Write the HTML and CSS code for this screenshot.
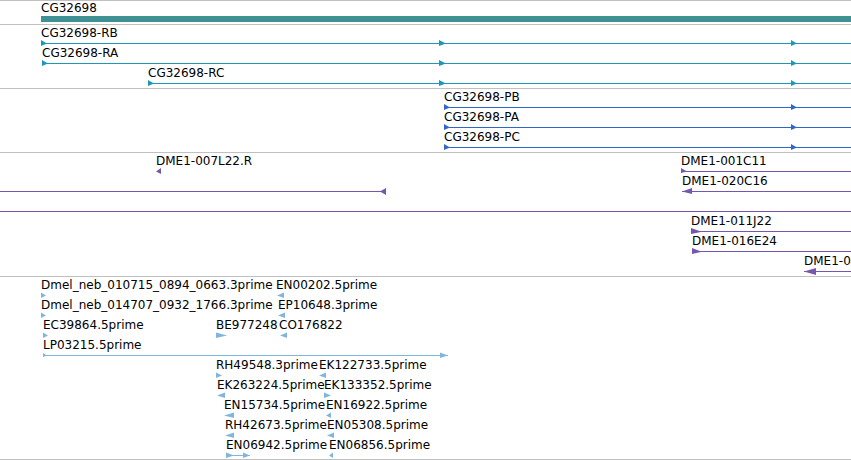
FILE: index.html
```html
<!DOCTYPE html>
<html lang="en">
<head>
    <meta charset="UTF-8">
    <title>CG32698 region</title>
    <link rel="stylesheet" href="styles.css">
</head>
<body>
<div id="panel">

    <!-- gene -->
    <div class="track gene">
        <svg width="851" height="23">
            <text x="41" y="11">CG32698</text>
            <rect x="41" y="15" width="810" height="6"></rect>
        </svg>
    </div>

    <!-- transcripts -->
    <div class="track tx">
        <svg width="851" height="63">
            <text x="41" y="12">CG32698-RB</text>
            <line x1="41" y1="18.5" x2="851" y2="18.5"></line>
            <polygon points="41,15 47,18.5 41,21"></polygon>
            <polygon points="439,15 446,18.5 439,21"></polygon>
            <polygon points="791,15 797,18.5 791,21"></polygon>

            <text x="42" y="32">CG32698-RA</text>
            <line x1="42" y1="38.5" x2="851" y2="38.5"></line>
            <polygon points="42,35 48,38.5 42,41"></polygon>
            <polygon points="439,35 446,38.5 439,41"></polygon>
            <polygon points="791,35 797,38.5 791,41"></polygon>

            <text x="148" y="52">CG32698-RC</text>
            <line x1="148" y1="58.5" x2="851" y2="58.5"></line>
            <polygon points="148,55 154,58.5 148,61"></polygon>
            <polygon points="439,55 446,58.5 439,61"></polygon>
            <polygon points="791,55 797,58.5 791,61"></polygon>
        </svg>
    </div>

    <!-- proteins -->
    <div class="track prot">
        <svg width="851" height="63">
            <text x="444" y="12">CG32698-PB</text>
            <line x1="444" y1="18.5" x2="851" y2="18.5"></line>
            <polygon points="444,15 450,18.5 444,21"></polygon>
            <polygon points="791,15 797,18.5 791,21"></polygon>

            <text x="444" y="32">CG32698-PA</text>
            <line x1="444" y1="38.5" x2="851" y2="38.5"></line>
            <polygon points="444,35 450,38.5 444,41"></polygon>
            <polygon points="791,35 797,38.5 791,41"></polygon>

            <text x="444" y="52">CG32698-PC</text>
            <line x1="444" y1="58.5" x2="851" y2="58.5"></line>
            <polygon points="444,55 450,58.5 444,61"></polygon>
            <polygon points="791,55 797,58.5 791,61"></polygon>
        </svg>
    </div>

    <!-- BAC ends -->
    <div class="track bac">
        <svg width="851" height="123">
            <text x="156" y="12">DME1-007L22.R</text>
            <polygon points="156,18.5 161,15 161,21"></polygon>

            <text x="681" y="12">DME1-001C11</text>
            <line x1="681" y1="18.5" x2="851" y2="18.5"></line>
            <polygon points="681,15 687,18.5 681,20"></polygon>

            <line x1="0" y1="38.5" x2="386" y2="38.5"></line>
            <polygon points="380,38.5 386,35 386,42"></polygon>

            <text x="682" y="32">DME1-020C16</text>
            <line x1="682" y1="38.5" x2="851" y2="38.5"></line>
            <polygon points="682,38.5 692,35 692,41"></polygon>

            <line x1="0" y1="58.5" x2="851" y2="58.5"></line>

            <text x="691" y="72">DME1-011J22</text>
            <line x1="691" y1="78.5" x2="851" y2="78.5"></line>
            <polygon points="691,75 701,78.5 701,79 691,81"></polygon>

            <text x="692" y="92">DME1-016E24</text>
            <line x1="692" y1="98.5" x2="851" y2="98.5"></line>
            <polygon points="692,95 701,98.5 701,99 692,101"></polygon>

            <text x="804" y="112">DME1-0</text>
            <line x1="804" y1="118.5" x2="851" y2="118.5"></line>
            <polygon points="804,118.5 816,115 816,122"></polygon>
        </svg>
    </div>

    <!-- ESTs -->
    <div class="track est">
        <svg width="851" height="182">
            <text x="41" y="12">Dmel_neb_010715_0894_0663.3prime</text>
            <polygon points="41,15.5 46,18.5 41,21"></polygon>
            <text x="276" y="12">EN00202.5prime</text>
            <polygon points="277,18.5 284,15.5 284,21"></polygon>

            <text x="41" y="32">Dmel_neb_014707_0932_1766.3prime</text>
            <polygon points="41,35.5 46,38.5 41,41"></polygon>
            <text x="278" y="32">EP10648.3prime</text>
            <polygon points="278,38.5 285,35.5 285,41"></polygon>

            <text x="43" y="52">EC39864.5prime</text>
            <polygon points="43,55.5 48,58.5 43,61"></polygon>
            <text x="216" y="52">BE977248</text>
            <polygon points="216,55.5 227,58.5 216,61"></polygon>
            <text x="279" y="52">CO176822</text>
            <polygon points="280,58.5 287,55.5 287,61"></polygon>

            <text x="43" y="72">LP03215.5prime</text>
            <line x1="43" y1="78.5" x2="448" y2="78.5"></line>
            <polygon points="43,76 47,78.5 43,80"></polygon>
            <polygon points="440,75.5 448,78.5 440,81"></polygon>

            <text x="216" y="92">RH49548.3prime</text>
            <polygon points="216,95.5 222,98.5 216,101"></polygon>
            <text x="319" y="92">EK122733.5prime</text>
            <polygon points="319,98.5 326,95.5 326,101"></polygon>

            <text x="217" y="112">EK263224.5prime</text>
            <polygon points="217,118.5 225,115.5 225,121"></polygon>
            <text x="324" y="112">EK133352.5prime</text>
            <polygon points="324,115.5 331,118.5 324,121"></polygon>

            <text x="224" y="132">EN15734.5prime</text>
            <polygon points="224,138.5 234,135.5 234,141"></polygon>
            <text x="326" y="132">EN16922.5prime</text>
            <polygon points="326,138.5 331,135.5 331,141"></polygon>

            <text x="225" y="152">RH42673.5prime</text>
            <polygon points="225,158.5 234,155.5 234,161"></polygon>
            <text x="327" y="152">EN05308.5prime</text>
            <polygon points="327,158.5 334,155.5 334,161"></polygon>

            <text x="226" y="172">EN06942.5prime</text>
            <line x1="226" y1="178.5" x2="250" y2="178.5"></line>
            <polygon points="226,175.5 234,178.5 226,181"></polygon>
            <polygon points="243,175.5 250,178.5 243,181"></polygon>
            <text x="329" y="172">EN06856.5prime</text>
            <polygon points="329,178.5 333,175.5 333,181"></polygon>
        </svg>
    </div>

</div>
</body>
</html>
```

FILE: styles.css
```css
html, body{
    margin: 0;
    background: #ffffff;
    overflow: hidden;
}
#panel{
    width: 851px;
    border-top: 1px solid #c0c0c0;
}
.track{
    border-bottom: 1px solid #c0c0c0;
}
.track svg{
    display: block;
    overflow: hidden;
}
.track text{
    font-family: "DejaVu Sans", sans-serif;
    font-size: 12px;
    fill: #000000;
}
.track line{
    stroke-width: 1;
    shape-rendering: crispEdges;
}
.gene rect{
    fill: #3f9193;
}
.tx line{
    stroke: #1f97b6;
}
.tx polygon{
    fill: #1f97b6;
}
.prot line{
    stroke: #3166c9;
}
.prot polygon{
    fill: #3166c9;
}
.bac line{
    stroke: #7557ae;
}
.bac polygon{
    fill: #7557ae;
}
.est line{
    stroke: #80b6de;
}
.est polygon{
    fill: #80b6de;
}
```
